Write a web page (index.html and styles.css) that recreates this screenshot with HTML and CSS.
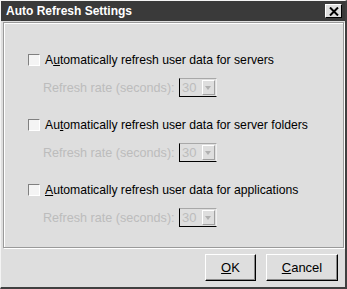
FILE: index.html
```html
<!DOCTYPE html>
<html lang="en">
<head>
    <meta charset="UTF-8">
    <title>Auto Refresh Settings</title>
    <link rel="stylesheet" href="styles.css">
</head>
<body>
    <div class="window">
        <div class="titlebar">
            <span class="title">Auto Refresh Settings</span>
            <button class="close-button">
                <svg width="10" height="9" viewBox="0 0 10 9"><path d="M1 0.5 L9 8.5 M9 0.5 L1 8.5" stroke="#000" stroke-width="2"/></svg>
            </button>
        </div>
        <div class="panel">
            <div class="group">
                <label class="check-row"><span class="checkbox"></span>A<u>u</u>tomatically refresh user data for servers</label>
                <div class="rate-row">
                    <span class="rate-label">Refresh rate (seconds):</span>
                    <span class="combo"><span class="combo-value">30</span><span class="combo-arrow"></span></span>
                </div>
            </div>
            <div class="group">
                <label class="check-row"><span class="checkbox"></span>Au<u>t</u>omatically refresh user data for server folders</label>
                <div class="rate-row">
                    <span class="rate-label">Refresh rate (seconds):</span>
                    <span class="combo"><span class="combo-value">30</span><span class="combo-arrow"></span></span>
                </div>
            </div>
            <div class="group">
                <label class="check-row"><span class="checkbox"></span><u>A</u>utomatically refresh user data for applications</label>
                <div class="rate-row">
                    <span class="rate-label">Refresh rate (seconds):</span>
                    <span class="combo"><span class="combo-value">30</span><span class="combo-arrow"></span></span>
                </div>
            </div>
        </div>
        <div class="footer">
            <button class="button ok-button"><u>O</u>K</button>
            <button class="button cancel-button"><u>C</u>ancel</button>
        </div>
    </div>
</body>
</html>
```

FILE: styles.css
```css
body {
    margin: 0;
    background-color: #dedede;
    font-family: 'Liberation Sans', Arial, sans-serif;
    font-size: 12px;
    color: #000;
}

.window {
    width: 347px;
    height: 289px;
    box-sizing: border-box;
    border-top: 1px solid #f4f4f4;
    border-left: 1px solid #f4f4f4;
    border-right: 2px solid #404040;
    border-bottom: 2px solid #404040;
    display: flex;
    flex-direction: column;
}

.titlebar {
    height: 20px;
    background-color: #3a3a3a;
    display: flex;
    align-items: center;
    justify-content: space-between;
    padding: 0 3px 0 5px;
}

.title {
    color: #fff;
    font-weight: bold;
    font-size: 12px;
}

.close-button {
    width: 17px;
    height: 14px;
    padding: 0;
    margin: 0;
    background-color: #dedede;
    border: 1px solid;
    border-color: #fff #000 #000 #fff;
    display: flex;
    align-items: center;
    justify-content: center;
}

.panel {
    margin: 1px 1px 0 2px;
    height: 226px;
    box-sizing: border-box;
    border: 1px solid #9a9a9a;
    box-shadow: inset 1px 1px 0 #fff, 1px 1px 0 #fff;
    padding: 27px 0 0 24px;
}

.group {
    margin-bottom: 18px;
}

.group:last-child .check-row {
    margin-top: 1px;
}

.check-row {
    height: 20px;
    display: flex;
    align-items: center;
    font-size: 12.2px;
}

.checkbox {
    width: 10px;
    height: 10px;
    background-color: #f4f4f4;
    border: 1px solid;
    border-color: #808080 #fff #fff #808080;
    margin-right: 5px;
}

.rate-row {
    margin-top: 8px;
    padding-left: 15px;
    height: 19px;
    display: flex;
    align-items: center;
}

.rate-label {
    color: #bcbcbc;
    font-size: 12.6px;
    width: 136px;
}

.combo {
    width: 38px;
    height: 19px;
    box-sizing: border-box;
    border: 1px solid;
    border-color: #a8a8a8 #f0f0f0 #000 #000;
    display: flex;
    align-items: center;
    justify-content: space-between;
    padding: 0 1px 0 2px;
}

.combo-value {
    color: #bcbcbc;
    font-size: 13px;
}

.combo-arrow {
    width: 13px;
    height: 15px;
    box-sizing: border-box;
    border: 1px solid;
    border-color: #fff #a0a0a0 #a0a0a0 #fff;
    position: relative;
}

.combo-arrow::after {
    content: '';
    position: absolute;
    left: 2px;
    top: 5px;
    border-left: 3.5px solid transparent;
    border-right: 3.5px solid transparent;
    border-top: 4px solid #b0b0b0;
}

.footer {
    flex: 1;
    display: flex;
    justify-content: flex-end;
    align-items: flex-start;
    gap: 10px;
    padding: 6px 7px 0 0;
}

.button {
    height: 27px;
    font-family: 'Liberation Sans', Arial, sans-serif;
    font-size: 13px;
    background-color: #dedede;
    border: 1px solid;
    border-color: #fff #000 #000 #fff;
    box-shadow: inset -1px -1px 0 #8a8a8a;
    padding: 0;
}

.ok-button {
    width: 51px;
}

.cancel-button {
    width: 72px;
}
```
